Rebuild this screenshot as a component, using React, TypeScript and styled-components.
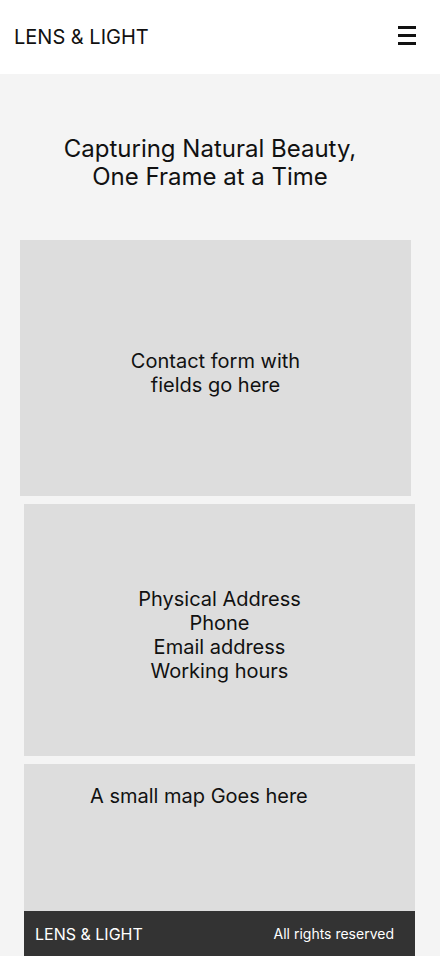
import React from "react";
import styled, { createGlobalStyle } from "styled-components";

const Global = createGlobalStyle`
  html, body { margin: 0; padding: 0; }
  body {
    background: #f4f4f4;
    font-family: Inter, "Noto Sans", "Liberation Sans", sans-serif;
    color: #111;
  }
  * { box-sizing: border-box; }
`;

const Header = styled.header`
  height: 74px;
  background: #fff;
  display: flex;
  align-items: center;
  justify-content: space-between;
  padding: 0 24px 0 14px;
`;

const Logo = styled.div<{ $size: number; $light?: boolean }>`
  font-size: ${(p) => p.$size}px;
  color: ${(p) => (p.$light ? "#fff" : "#111")};
  letter-spacing: 0;
  line-height: 1;
`;

const Burger = styled.button`
  width: 18px;
  height: 19px;
  padding: 0;
  border: 0;
  background: transparent;
  display: flex;
  flex-direction: column;
  justify-content: center;
  gap: 5px;
  margin-bottom: 4px;
`;

const Bar = styled.span`
  display: block;
  height: 3px;
  width: 18px;
  background: #111;
`;

const Hero = styled.section`
  padding: 61px 30px 0 10px;
  text-align: center;
`;

const Title = styled.h1`
  margin: 0;
  font-size: 24px;
  line-height: 28px;
  font-weight: 400;
`;

const Panel = styled.div<{ $left: number; $top: number; $height: number }>`
  margin-left: ${(p) => p.$left}px;
  margin-top: ${(p) => p.$top}px;
  width: 391px;
  height: ${(p) => p.$height}px;
  background: #dddddd;
  display: flex;
  align-items: center;
  justify-content: center;
  text-align: center;
  font-size: 20px;
  line-height: 24px;
  padding-top: 10px;
`;

const MapColumn = styled.div`
  margin-left: 24px;
  margin-top: 8px;
  width: 391px;
  display: flex;
  flex-direction: column;
`;

const MapBox = styled.div`
  height: 147px;
  background: #dddddd;
  padding: 20px 0 0 66px;
  font-size: 20px;
  line-height: 24px;
`;

const Footer = styled.footer`
  height: 45px;
  background: #333;
  display: flex;
  align-items: center;
  justify-content: space-between;
  padding: 0 21px 0 11px;
`;

const Rights = styled.span`
  color: #fff;
  font-size: 14px;
`;

export default function App() {
  return (
    <>
      <Global />
      <Header>
        <Logo $size={20}>LENS &amp; LIGHT</Logo>
        <Burger aria-label="menu">
          <Bar />
          <Bar />
          <Bar />
        </Burger>
      </Header>
      <Hero>
        <Title>
          Capturing Natural Beauty,
          <br />
          One Frame at a Time
        </Title>
      </Hero>
      <Panel $left={20} $top={49} $height={256}>
        Contact form with
        <br />
        fields go here
      </Panel>
      <Panel $left={24} $top={8} $height={252}>
        Physical Address
        <br />
        Phone
        <br />
        Email address
        <br />
        Working hours
      </Panel>
      <MapColumn>
        <MapBox>A small map Goes here</MapBox>
        <Footer>
          <Logo $size={16} $light>
            LENS &amp; LIGHT
          </Logo>
          <Rights>All rights reserved</Rights>
        </Footer>
      </MapColumn>
    </>
  );
}
